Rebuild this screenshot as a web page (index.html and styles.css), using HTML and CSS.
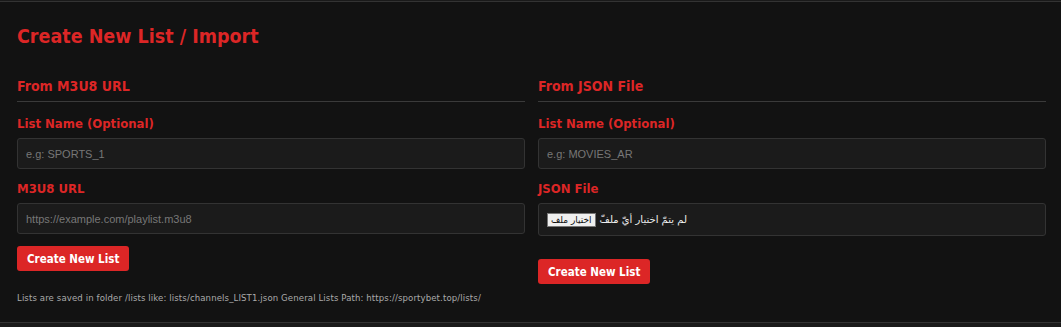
FILE: index.html
```html
<!DOCTYPE html>
<html>
  <head>
    <meta charset="UTF-8">
    <title>Create New List / Import</title>
    <link rel="stylesheet" href="styles.css">
  </head>
  <body>
    <div class="card">
      <h2 class="title">Create New List / Import</h2>
      <div class="cols">
        <div class="col">
          <h3 class="section">From M3U8 URL</h3>
          <label class="label">List Name (Optional)</label>
          <input type="text" class="field" placeholder="e.g: SPORTS_1">
          <label class="label">M3U8 URL</label>
          <input type="text" class="field" placeholder="https://example.com/playlist.m3u8">
          <button class="btn">Create New List</button>
        </div>
        <div class="col">
          <h3 class="section">From JSON File</h3>
          <label class="label">List Name (Optional)</label>
          <input type="text" class="field" placeholder="e.g: MOVIES_AR">
          <label class="label">JSON File</label>
          <div class="field file-field">
            <span class="file-btn">اختيار ملف</span>
            <span class="file-name">لم يتمّ اختيار أيّ ملفّ</span>
          </div>
          <button class="btn">Create New List</button>
        </div>
      </div>
      <p class="note">Lists are saved in folder /lists like: lists/channels_LIST1.json General Lists Path: https://sportybet.top/lists/</p>
    </div>
  </body>
</html>
```

FILE: styles.css
```css
body {
  margin: 0;
  padding-top: 1px;
  background: #1a1a1a;
  font-family: "DejaVu Sans Condensed", "DejaVu Sans", Verdana, sans-serif;
}
.card {
  background: #121212;
  border-top: 1px solid #333;
  border-bottom: 1px solid #333;
  padding: 16px 15px 14px 17px;
  height: 290px;
}
.title {
  color: #dc2626;
  font-size: 19.5px;
  margin: 7px 0 30px;
}
.cols {
  display: grid;
  grid-template-columns: 1fr 1fr;
  gap: 13px;
}
.section {
  color: #dc2626;
  font-size: 14px;
  margin: 0 0 14px;
  padding-bottom: 7px;
  border-bottom: 1px solid #3a3a3a;
}
.label {
  display: block;
  color: #dc2626;
  font-size: 13px;
  font-weight: bold;
  margin-bottom: 7px;
}
.field {
  display: block;
  box-sizing: border-box;
  width: 100%;
  height: 31px;
  padding: 0 8px;
  margin-bottom: 12px;
  background: #1b1b1b;
  border: 1px solid #333;
  border-radius: 3px;
  color: #ddd;
  font-family: "Liberation Sans", Arial, sans-serif;
  font-size: 11px;
}
.field::placeholder {
  color: #777;
}
.file-field {
  height: 33px;
  margin-bottom: 23px;
  display: flex;
  align-items: center;
  gap: 4px;
  font-family: "DejaVu Sans", sans-serif;
  font-size: 10px;
  color: #eee;
}
.file-btn {
  background: #efefef;
  color: #111;
  border: 1px solid #767676;
  padding: 1px 3px;
  font-size: 9px;
}
.btn {
  background: #dc2626;
  color: #fff;
  border: none;
  border-radius: 3px;
  padding: 0 10px;
  height: 25px;
  font-family: "DejaVu Sans Condensed", "DejaVu Sans", sans-serif;
  font-weight: bold;
  font-size: 11.5px;
}
.note {
  color: #aaa;
  font-size: 9.5px;
  letter-spacing: 0.12px;
  margin: 8px 0 0;
}
```
